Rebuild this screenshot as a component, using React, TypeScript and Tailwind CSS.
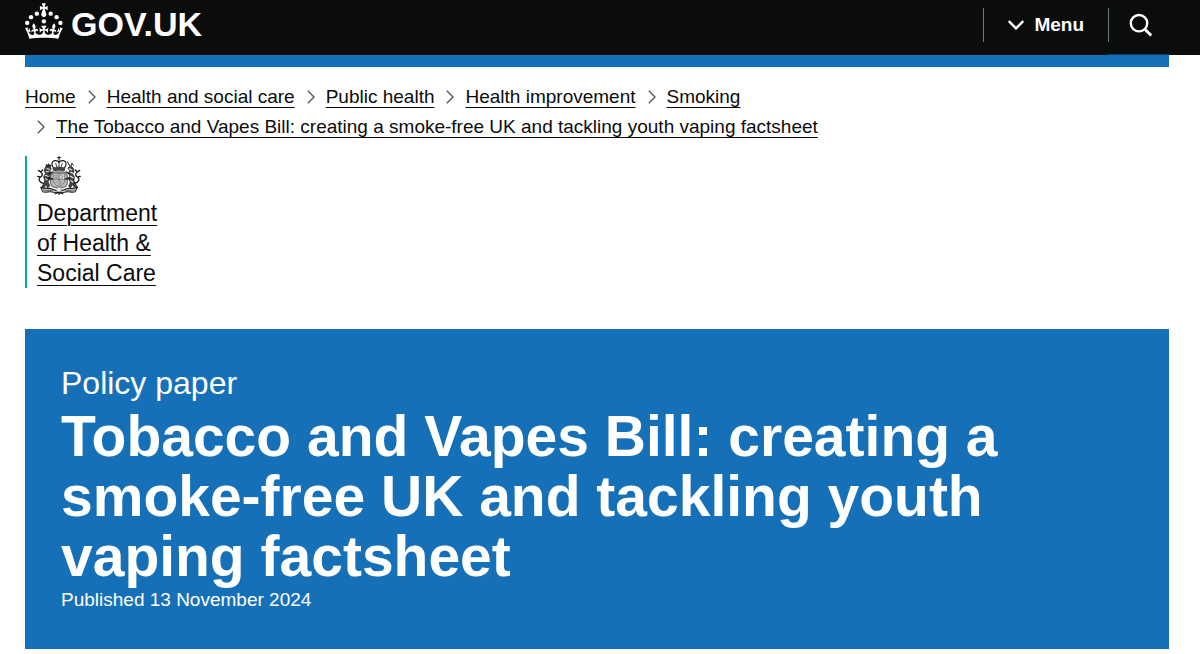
import type { ReactNode } from 'react'

const trail = [
  'Home',
  'Health and social care',
  'Public health',
  'Health improvement',
  'Smoking',
  'The Tobacco and Vapes Bill: creating a smoke-free UK and tackling youth vaping factsheet',
]

function Container({ children, className = '' }: { children: ReactNode; className?: string }) {
  return <div className={`ml-[25px] mr-[31px] ${className}`}>{children}</div>
}

function Crown() {
  return (
    <svg viewBox="0 0 64 60" className="h-9 w-[38px]" fill="currentColor" aria-hidden="true">
      <circle cx="20" cy="17.6" r="3.7" />
      <circle cx="10.2" cy="23.5" r="3.7" />
      <circle cx="3.7" cy="33.2" r="3.7" />
      <circle cx="31.7" cy="30.6" r="3.7" />
      <circle cx="43.3" cy="17.6" r="3.7" />
      <circle cx="53.2" cy="23.5" r="3.7" />
      <circle cx="59.7" cy="33.2" r="3.7" />
      <path d="M33.1,9.8c.2-.1.3-.3.5-.5l4.6,2.4v-6.8l-4.6,1.5c-.1-.2-.3-.3-.5-.5l1.9-5.9h-6.7l1.9,5.9c-.2.1-.3.3-.5.5l-4.6-1.5v6.8l4.6-2.4c.1.2.3.3.5.5l-2.6,8c-.9,2.8,1.2,5.7,4.1,5.7h0c3,0,5.1-2.9,4.1-5.7l-2.6-8ZM37,37.9s-3.4,3.8-4.1,6.1c2.2,0,4.2-.5,6.4-2.8l-.7,8.5c-2-2.8-4.4-4.1-5.7-3.8.1,3.1.5,6.7,5.8,7.2,3.7.3,6.7-1.5,7-3.8.4-2.6-2-4.3-3.7-1.6-1.4-4.5,2.4-6.1,4.9-3.2-1.9-4.5-1.8-7.7,2.4-10.9,3,4,2.6,7.3-1.2,11.1,2.4-1.3,6.2,0,4,4.6-1.2-2.8-3.7-2.2-4.2.2-.3,1.7.7,3.7,3,4.2,1.9.3,4.7-.9,7-5.9-1.3,0-2.4.7-3.9,1.7l2.4-8c.6,2.3,1.4,3.7,2.2,4.5.6-1.6.5-2.8,0-5.3l5,1.8c-2.6,3.6-5.2,8.7-7.3,17.5-7.4-1.1-15.7-1.7-24.5-1.7h0c-8.8,0-17.1.6-24.5,1.7-2.1-8.9-4.7-13.9-7.3-17.5l5-1.8c-.5,2.5-.6,3.7,0,5.3.8-.8,1.6-2.3,2.2-4.5l2.4,8c-1.5-1-2.6-1.7-3.9-1.7,2.3,5,5.2,6.2,7,5.9,2.3-.4,3.3-2.4,3-4.2-.5-2.4-3-3.1-4.2-.2-2.2-4.6,1.6-6,4-4.6-3.7-3.7-4.2-7.1-1.2-11.1,4.2,3.2,4.3,6.4,2.4,10.9,2.5-2.8,6.3-1.3,4.9,3.2-1.8-2.7-4.1-1-3.7,1.6.3,2.3,3.3,4.1,7,3.8,5.4-.5,5.7-4.2,5.8-7.2-1.3-.2-3.7,1-5.7,3.8l-.7-8.5c2.2,2.3,4.2,2.7,6.4,2.8-.7-2.3-4.1-6.1-4.1-6.1h10.6,0Z" />
    </svg>
  )
}

function Crest() {
  return (
    <svg viewBox="0 0 132 117" className="h-[39px] w-11" fill="none" stroke="#1c1c1c" strokeLinecap="round" aria-hidden="true">
      {/* crown */}
      <path d="M66 1v10M61 5h10" strokeWidth="3" />
      <path d="M50 36c-8-9-7-20 3-22 5-1 10 1 13 5 3-4 8-6 13-5 10 2 11 13 3 22" strokeWidth="3.5" />
      <path d="M66 13v20M56 22l4 11M76 22l-4 11" strokeWidth="2.5" />
      <path d="M49 36c11-3 23-3 34 0l-1 8c-10-2-22-2-32 0z" fill="#444" strokeWidth="2" />
      {/* shield and garter */}
      <rect x="41" y="48" width="50" height="46" rx="14" fill="#bdbdbd" stroke="#777" strokeWidth="4" strokeDasharray="4 2" />
      <path d="M49 53h34v20c0 10-9 15-17 19-8-4-17-9-17-19z" fill="#cfcfcf" stroke="#555" strokeWidth="2" />
      <path d="M66 54v36M50 71h32" stroke="#555" strokeWidth="2" />
      <path d="M53 59h10M53 63h10M53 67h10M70 75v10M75 75v8M71 57l7 5-7 6M55 76l7 7M62 75l-7 7" stroke="#777" strokeWidth="2" />
      {/* lion */}
      <path d="M25 34c4-6 12-6 15 0l3 6-5 4 4 8-4 9 2 9-7 6 5 14-6 6-5-11-6 11h-9l8-13 3-9-3-12 5-9-3-9z" fill="#444" strokeWidth="2" />
      <path d="M27 31l1-6 4 3 3-5 3 5 4-1-1 6" fill="#222" strokeWidth="2" />
      <path d="M30 38l8 2M27 48l8-2M25 58l9 3M25 68l6 3" stroke="#e4e4e4" strokeWidth="3" />
      <path d="M36 53l10-5M35 66l11 3" strokeWidth="4" />
      <path d="M19 82C6 79 3 68 11 63c6-4 7-10 0-15l-7-5M11 48l6-6M9 63l-7-2" strokeWidth="4" />
      {/* unicorn */}
      <path d="M93 36l9-7 7 8 2 9-4 8 5 8-1 12 6 12 6 9h-9l-8-9-6 10-5-5 5-13-5-8 3-10-4-8 4-7z" fill="#444" strokeWidth="2" />
      <path d="M98 29 91 17M103 28l2-6 4 6" strokeWidth="3" />
      <path d="M97 38l7 4M101 49l6 3M99 60l9 5M102 74l5 4" stroke="#efefef" strokeWidth="3.5" />
      <path d="M97 53l-10-5M98 66l-12 3" strokeWidth="4" />
      <path d="M113 82c13-3 16-14 8-19-6-4-7-10 0-15l7-5M121 48l-6-6M123 63l7-2" strokeWidth="4" />
      {/* motto scroll */}
      <path d="M12 95c12 4 20 1 29 3 8 2 13 7 25 7s17-5 25-7c9-2 17 1 29-3l-5 12c-10 4-20-2-29 1-9 4-31 4-40 0-9-3-19 3-29-1z" fill="#d8d8d8" stroke="#2a2a2a" strokeWidth="3.5" />
      <path d="M20 102c10 2 17-1 26 3M112 102c-10 2-17-1-26 3" stroke="#444" strokeWidth="3" strokeDasharray="3 3" />
      <circle cx="66" cy="101" r="8" fill="#e4e4e4" stroke="#888" strokeWidth="2" />
      <path d="M55 113l7-4M77 113l-7-4M66 109v6" strokeWidth="4" />
    </svg>
  )
}

function Separator() {
  return (
    <svg viewBox="0 0 8 14" className="h-3.5 w-2 shrink-0" fill="none" stroke="#505a5f" strokeWidth="1.4" aria-hidden="true">
      <path d="M.8.8 7 7 .8 13.2" />
    </svg>
  )
}

export default function App() {
  return (
    <div className="bg-white pb-[5px] font-['Liberation_Sans',Arial,sans-serif] text-[19px] text-[#0b0c0c]">
      <header className="bg-[#0b0c0c] text-white">
        <Container className="flex h-[55px] items-start justify-between">
          <a href="#" aria-label="GOV.UK" className="flex items-start gap-2 pt-[3px]">
            <Crown />
            <span className="text-[34px] leading-[42px] font-bold">GOV.UK</span>
          </a>
          <nav className="flex h-full">
            <button type="button" className="flex h-[50px] items-center">
              <span className="flex h-[34px] items-center gap-2.5 border-l border-[#6f777b] px-6 font-bold">
                <svg viewBox="0 0 16 10" className="h-2.5 w-4" fill="none" stroke="currentColor" strokeWidth="2.4" aria-hidden="true">
                  <path d="M.8 1 8 8.4 15.2 1" />
                </svg>
                Menu
              </span>
            </button>
            <button type="button" aria-label="Search GOV.UK" className="h-[55px] w-[61px] border-b border-[#0b3a75] pb-1">
              <span className="flex h-[34px] items-center border-l border-[#6f777b] pl-5">
                <svg viewBox="0 0 24 24" className="size-6" fill="none" stroke="currentColor" strokeWidth="2.4" aria-hidden="true">
                  <circle cx="10" cy="10.2" r="8.2" />
                  <path d="m15.6 16 6.6 6.6" strokeWidth="2.8" />
                </svg>
              </span>
            </button>
          </nav>
        </Container>
      </header>

      <Container>
        <div className="h-3 bg-[#1670b8]" />

        <nav aria-label="Breadcrumb" className="pt-[15px]">
          <ol className="flex flex-wrap leading-[30px]">
            {trail.map((label, i) => (
              <li key={label} className={i > 0 ? 'ml-3 flex items-center gap-[11px]' : 'flex items-center'}>
                {i > 0 && <Separator />}
                <a href="#" className="underline decoration-1 underline-offset-4">{label}</a>
              </li>
            ))}
          </ol>
        </nav>

        <div className="mt-3.5 border-l-2 border-[#00ad93] pl-2.5">
          <Crest />
          <a href="#" className="mt-[3px] block text-[23px] leading-[30px] underline decoration-1 underline-offset-4">
            Department
            <br />
            of Health &amp;
            <br />
            Social Care
          </a>
        </div>

        <main className="mt-[41px] bg-[#1670b8] px-9 pt-9 pb-[35px] text-white">
          <p className="text-[32px] leading-9">Policy paper</p>
          <h1 className="mt-[5px] text-[57px] leading-[60px] font-bold">
            Tobacco and Vapes Bill: creating a smoke-free UK and tackling youth vaping factsheet
          </h1>
          <p className="leading-7">Published 13 November 2024</p>
        </main>
      </Container>
    </div>
  )
}
